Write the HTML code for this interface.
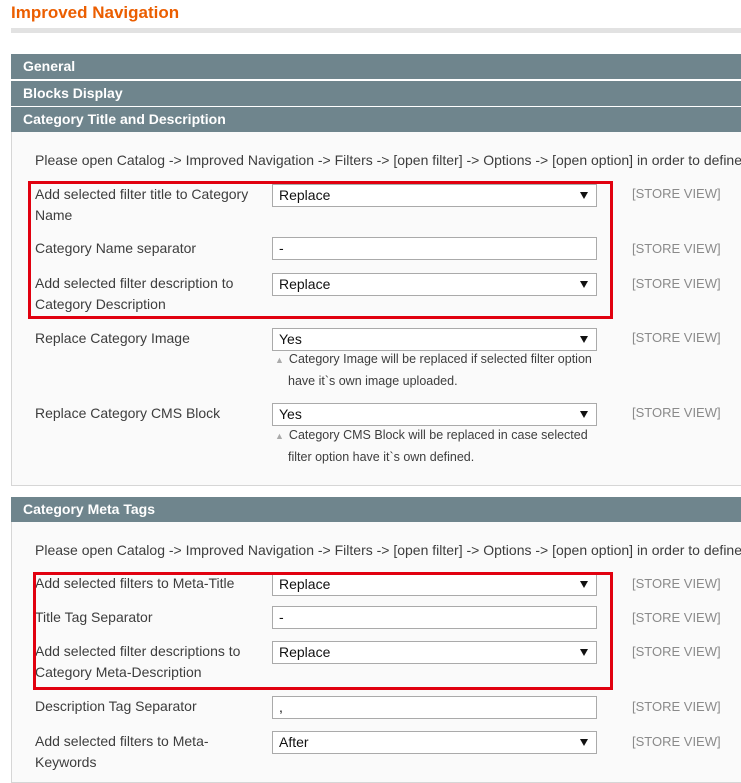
<!DOCTYPE html>
<html><head><style>
body{margin:0;width:741px;height:776px;overflow:hidden;background:#fff;font-family:"Liberation Sans",Arial,sans-serif;position:relative;color:#3d3d3d}
.a{position:absolute;white-space:nowrap}
h1{position:absolute;left:11px;top:3px;margin:0;font-size:17px;color:#eb5e00;font-weight:bold}
.rule{position:absolute;left:11px;top:28px;width:730px;height:5px;background:#e2e2e2}
.bar{position:absolute;left:11px;width:730px;height:25px;background:#6f858d;color:#fff;font-weight:bold;font-size:14px;line-height:25px;text-indent:12px}
.panel{position:absolute;left:11px;width:729px;background:#fafafa;border:1px solid #d6d6d6;border-top:none}
.lbl{position:absolute;left:35px;font-size:14px;line-height:21px;color:#3d3d3d}
.sel{position:absolute;left:272px;width:323px;height:21px;border:1px solid #aaa;background:#fff;font-size:14px;line-height:21px;text-indent:6px;color:#111;box-sizing:content-box}
.sel.dd::after{content:"";position:absolute;right:8px;top:7px;border-left:4px solid transparent;border-right:4px solid transparent;border-top:7px solid #111}
.sv{position:absolute;left:632px;font-size:13px;color:#8a8a8a}
.note{position:absolute;left:275px;font-size:12.5px;line-height:21px;color:#3d3d3d}
.note b{font-weight:normal;color:#aaa;font-size:9px;margin-right:5px}
.red{position:absolute;border:3px solid #e1000f;box-sizing:border-box}
.intro{position:absolute;left:35px;font-size:14px;white-space:nowrap;color:#3d3d3d}
</style></head><body>
<h1>Improved Navigation</h1>
<div class="rule"></div>
<div class="bar" style="top:54px">General</div>
<div class="bar" style="top:81px">Blocks Display</div>
<div class="bar" style="top:107px">Category Title and Description</div>
<div class="panel" style="top:132px;height:353px"></div>
<div class="intro" style="top:152px">Please open Catalog -&gt; Improved Navigation -&gt; Filters -&gt; [open filter] -&gt; Options -&gt; [open option] in order to define</div>

<div class="lbl" style="top:184px">Add selected filter title to Category<br>Name</div>
<div class="sel dd" style="top:184px">Replace</div><div class="sv" style="top:186px">[STORE VIEW]</div>
<div class="lbl" style="top:238px">Category Name separator</div>
<div class="sel" style="top:237px">-</div><div class="sv" style="top:241px">[STORE VIEW]</div>
<div class="lbl" style="top:273px">Add selected filter description to<br>Category Description</div>
<div class="sel dd" style="top:273px">Replace</div><div class="sv" style="top:276px">[STORE VIEW]</div>
<div class="red" style="left:28px;top:181px;width:585px;height:138px"></div>

<div class="lbl" style="top:328px">Replace Category Image</div>
<div class="sel dd" style="top:328px">Yes</div><div class="sv" style="top:330px">[STORE VIEW]</div>
<div class="note" style="top:349px"><b>▲</b>Category Image will be replaced if selected filter option<br><span style="margin-left:13px">have it`s own image uploaded.</span></div>
<div class="lbl" style="top:403px">Replace Category CMS Block</div>
<div class="sel dd" style="top:403px">Yes</div><div class="sv" style="top:405px">[STORE VIEW]</div>
<div class="note" style="top:425px"><b>▲</b>Category CMS Block will be replaced in case selected<br><span style="margin-left:13px">filter option have it`s own defined.</span></div>

<div class="bar" style="top:497px">Category Meta Tags</div>
<div class="panel" style="top:522px;height:260px"></div>
<div class="intro" style="top:542px">Please open Catalog -&gt; Improved Navigation -&gt; Filters -&gt; [open filter] -&gt; Options -&gt; [open option] in order to define</div>

<div class="lbl" style="top:573px">Add selected filters to Meta-Title</div>
<div class="sel dd" style="top:573px">Replace</div><div class="sv" style="top:576px">[STORE VIEW]</div>
<div class="lbl" style="top:607px">Title Tag Separator</div>
<div class="sel" style="top:606px">-</div><div class="sv" style="top:610px">[STORE VIEW]</div>
<div class="lbl" style="top:641px">Add selected filter descriptions to<br>Category Meta-Description</div>
<div class="sel dd" style="top:641px">Replace</div><div class="sv" style="top:644px">[STORE VIEW]</div>
<div class="red" style="left:33px;top:572px;width:580px;height:118px"></div>

<div class="lbl" style="top:696px">Description Tag Separator</div>
<div class="sel" style="top:696px">,</div><div class="sv" style="top:699px">[STORE VIEW]</div>
<div class="lbl" style="top:731px">Add selected filters to Meta-<br>Keywords</div>
<div class="sel dd" style="top:731px">After</div><div class="sv" style="top:734px">[STORE VIEW]</div>
</body></html>
